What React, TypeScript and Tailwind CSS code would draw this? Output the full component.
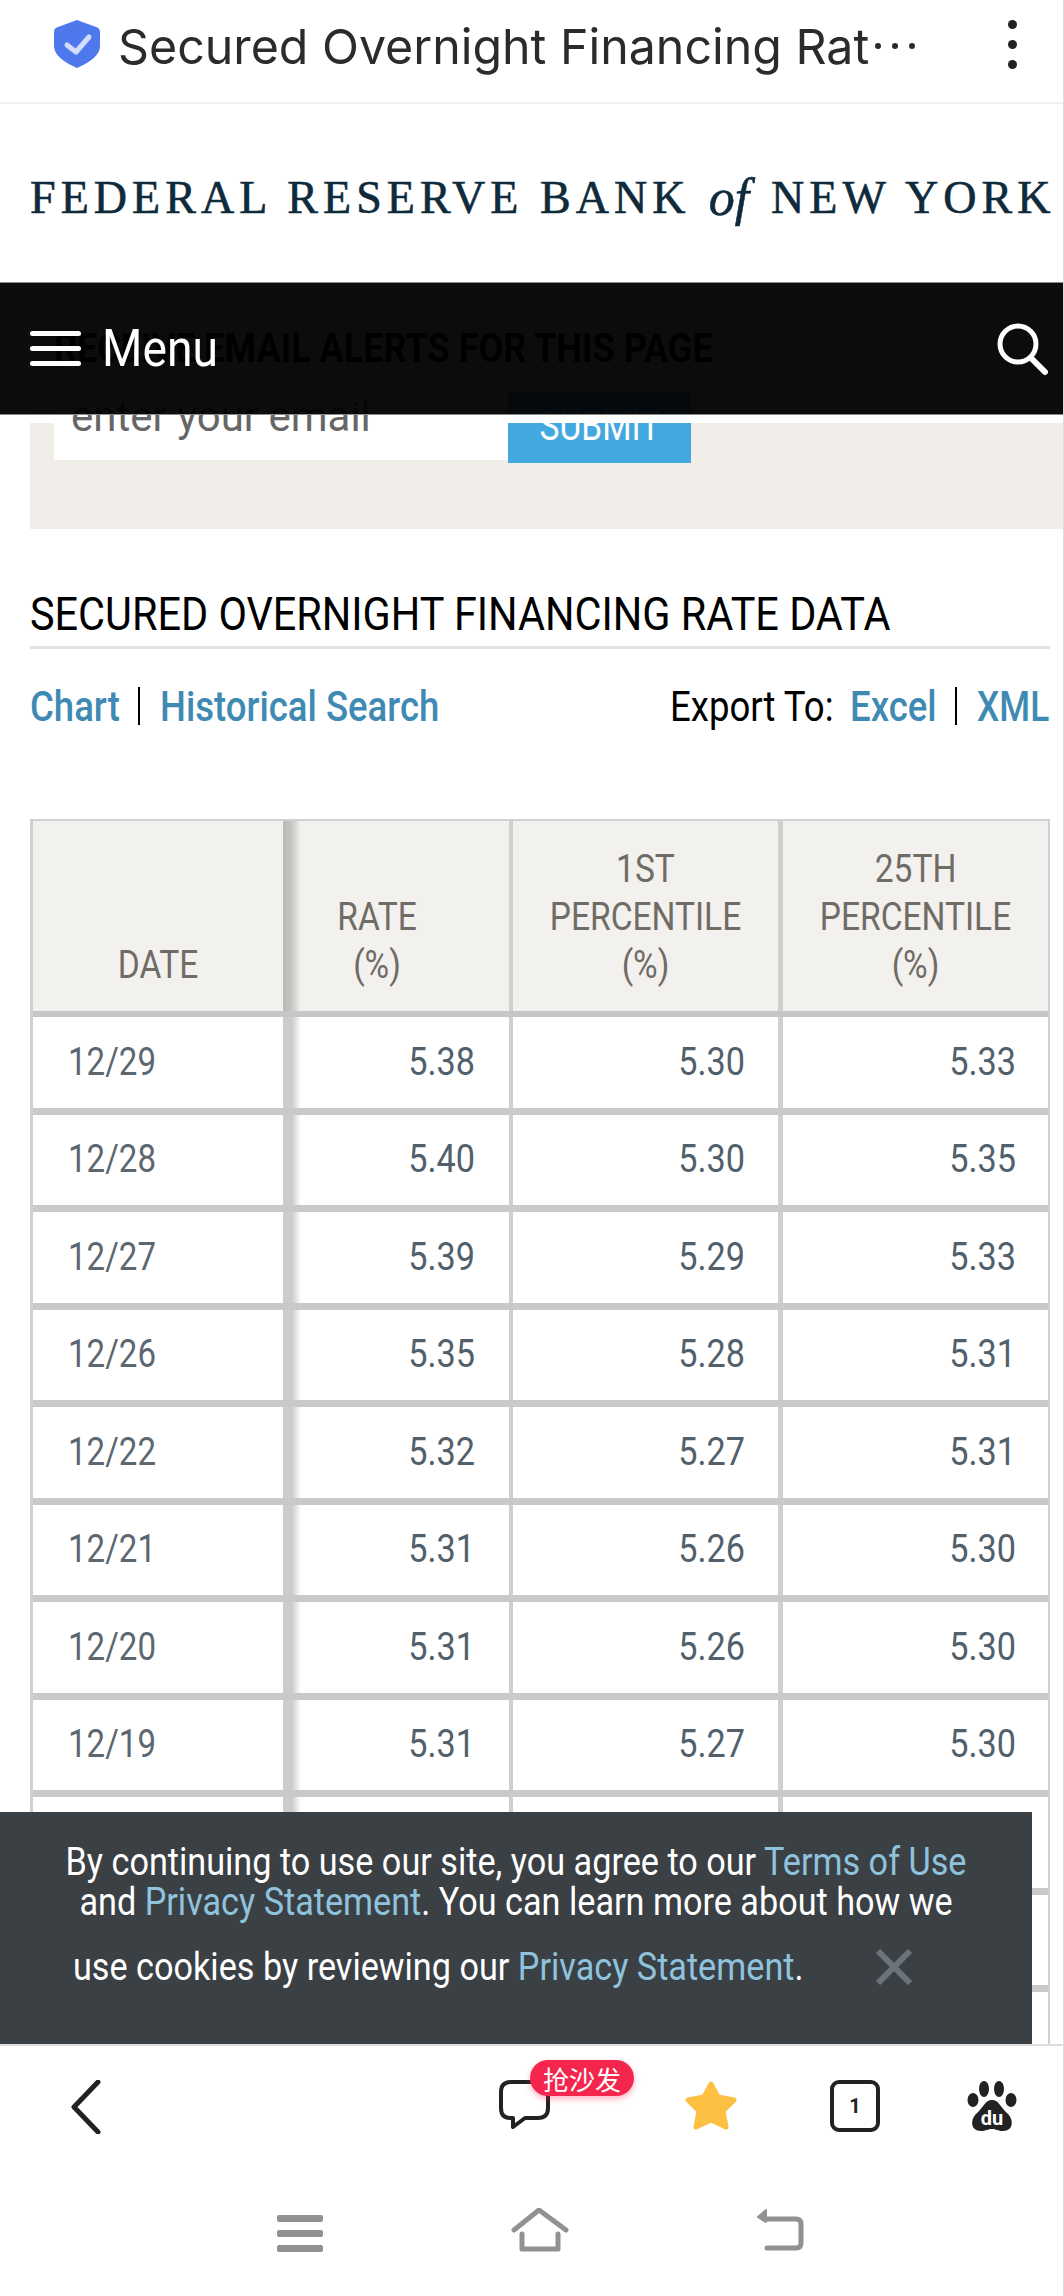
const ROWS = [
  ["12/29", "5.38", "5.30", "5.33"],
  ["12/28", "5.40", "5.30", "5.35"],
  ["12/27", "5.39", "5.29", "5.33"],
  ["12/26", "5.35", "5.28", "5.31"],
  ["12/22", "5.32", "5.27", "5.31"],
  ["12/21", "5.31", "5.26", "5.30"],
  ["12/20", "5.31", "5.26", "5.30"],
  ["12/19", "5.31", "5.27", "5.30"],
  ["", "", "", ""],
  ["", "", "", ""],
  ["", "", "", ""],
];

const COLS = "grid grid-cols-[250px_230px_270px_265px]";

function HeaderCell({ lines, className }: { lines: string[]; className: string }) {
  return (
    <div className={`flex flex-col justify-end pb-[22px] text-[39px] leading-[48px] text-[#6f6c66] ${className}`}>
      {lines.map((line) => (
        <span key={line} className="block scale-x-[0.86] whitespace-nowrap text-center">
          {line}
        </span>
      ))}
    </div>
  );
}

function ValueCell({ value, className }: { value: string; className: string }) {
  return (
    <div className={`flex items-center text-[38px] text-[#51606a] ${className}`}>
      <span className="block w-full origin-right scale-x-[0.9] text-right">{value}</span>
    </div>
  );
}

function RateTable() {
  return (
    <div className="ml-[30px] w-[1020px] border-t-[2px] border-r-[2px] border-l-[3px] border-[#d0d0d0] font-['Roboto',sans-serif]">
      <div className={`${COLS} h-[196px] border-b-[6px] border-[#c6c6c6] bg-[#f3f1ed]`}>
        <HeaderCell lines={["DATE"]} className="" />
        <HeaderCell
          lines={["RATE", "(%)"]}
          className="border-r-[4px] border-[#cfcfcf] pr-[38px] bg-[linear-gradient(to_right,#b9b8b4_0,#c6c5c1_8px,#f3f1ed_18px)]"
        />
        <HeaderCell lines={["1ST", "PERCENTILE", "(%)"]} className="border-r-[5px] border-[#cfcfcf]" />
        <HeaderCell lines={["25TH", "PERCENTILE", "(%)"]} className="" />
      </div>
      {ROWS.map((row, i) => (
        <div key={i} className={`${COLS} h-[97.5px] border-b-[7px] border-[#c9c9c9] bg-white`}>
          <div className="flex items-center pl-[35px] text-[38px] text-[#5c6770]">
            <span className="block origin-left scale-x-[0.87]">{row[0]}</span>
          </div>
          <ValueCell
            value={row[1]}
            className="border-r-[4px] border-[#cfcfcf] pr-[34px] bg-[linear-gradient(to_right,#cccccc_0,#cccccc_9px,#ffffff_18px)]"
          />
          <ValueCell value={row[2]} className="border-r-[5px] border-[#cfcfcf] pr-[33px]" />
          <ValueCell value={row[3]} className="pr-[32px]" />
        </div>
      ))}
    </div>
  );
}

function CookieBanner() {
  return (
    <div className="absolute bottom-0 left-0 z-30 h-[232px] w-[1032px] bg-[#3b4045] pt-[30px] font-['Roboto',sans-serif] text-[38px] leading-[40px] text-white">
      <p className="scale-x-[0.9] whitespace-nowrap text-center">
        By continuing to use our site, you agree to our <span className="text-[#8fc3dd]">Terms of Use</span>
      </p>
      <p className="scale-x-[0.9] whitespace-nowrap text-center">
        and <span className="text-[#8fc3dd]">Privacy Statement</span>. You can learn more about how we
      </p>
      <div className="mt-[25px] flex items-center pl-[73px]">
        <p className="w-[802px] origin-left scale-x-[0.9] whitespace-nowrap">
          use cookies by reviewing our <span className="text-[#8fc3dd]">Privacy Statement</span>.
        </p>
        <svg width="38" height="36" viewBox="0 0 38 36" className="text-[#6c737b]">
          <path d="M3 2 35 34M35 2 3 34" stroke="currentColor" strokeWidth="6" fill="none" />
        </svg>
      </div>
    </div>
  );
}

function SiteNav() {
  return (
    <>
      <div className="absolute top-[178px] left-0 z-20 flex h-[133px] w-full items-center justify-between border-y border-[#8a8a8a] bg-black/95 pr-[15px] pl-[30px]">
        <div className="flex items-center">
          <div className="flex w-[51px] flex-col gap-[10px]">
            <div className="h-[5px] rounded-full bg-white" />
            <div className="h-[5px] rounded-full bg-white" />
            <div className="h-[5px] rounded-full bg-white" />
          </div>
          <span className="ml-[21px] block origin-left scale-x-[0.89] font-['Roboto',sans-serif] text-[52px] leading-none text-white">
            Menu
          </span>
        </div>
        <svg width="52" height="54" viewBox="0 0 52 54" fill="none" stroke="white">
          <circle cx="22" cy="22" r="18" strokeWidth="5" />
          <path d="M35 36 49 50" strokeWidth="6" strokeLinecap="round" />
        </svg>
      </div>
      <div className="absolute top-[311px] left-0 z-10 h-[8px] w-full bg-white" />
    </>
  );
}

function EmailPanel() {
  return (
    <div className="mt-[18px] ml-[30px] h-[229px] bg-[#f1ede8] pt-[26px] pl-[24px] font-['Roboto',sans-serif]">
      <h3 className="origin-left scale-x-[0.9] text-[40px] leading-[46px] font-bold whitespace-nowrap text-black">
        RECEIVE EMAIL ALERTS FOR THIS PAGE
      </h3>
      <div className="mt-[19px] flex items-start">
        <div className="flex h-[69px] w-[454px] items-center bg-white pb-[18px] pl-[17px]">
          <span className="relative z-[15] block text-[42px] text-[#666666]">enter your email</span>
        </div>
        <div className="flex h-[72px] w-[183px] items-center justify-center bg-[#42a8df] text-[40px] text-white">
          <span className="block scale-x-[0.84]">SUBMIT</span>
        </div>
      </div>
    </div>
  );
}

function TopBar() {
  return (
    <div className="flex h-[104px] shrink-0 items-start border-b-[2px] border-[#f1f1f1] pt-[20px] pl-[54px]">
      <svg width="46" height="48" viewBox="0 0 46 48">
        <path d="M23 0 42 7Q46 8 46 12V26Q46 38 23 48 0 38 0 26V12Q0 8 4 7Z" fill="#4f78ec" />
        <path d="M13 25 22 32 35 17" fill="none" stroke="#d3ddfb" strokeWidth="5" strokeLinecap="round" strokeLinejoin="round" />
      </svg>
      <span className="mt-[4px] ml-[18px] w-[750px] font-['Inter',sans-serif] text-[48.3px] leading-[46px] whitespace-nowrap text-[#2b2b2b]">
        Secured Overnight Financing Rat
      </span>
      <div className="mt-[23px] ml-[7px] flex gap-[11px]">
        <div className="size-[6px] rounded-full bg-[#2b2b2b]" />
        <div className="size-[6px] rounded-full bg-[#2b2b2b]" />
        <div className="size-[6px] rounded-full bg-[#2b2b2b]" />
      </div>
      <div className="ml-[93px] flex flex-col gap-[11px]">
        <div className="size-[9px] rounded-full bg-[#222222]" />
        <div className="size-[9px] rounded-full bg-[#222222]" />
        <div className="size-[9px] rounded-full bg-[#222222]" />
      </div>
    </div>
  );
}

function BottomBars() {
  return (
    <div className="relative z-40 h-[252px] shrink-0 border-t-[2px] border-[#dddddd] bg-white">
      <div className="flex items-start pt-[34px]">
        <svg width="30" height="54" viewBox="0 0 30 54" fill="none" stroke="#222222" strokeWidth="5" strokeLinecap="round" strokeLinejoin="round" className="ml-[71px]">
          <path d="M27 2 3 27 27 52" />
        </svg>
        <div className="relative ml-[398px]">
          <svg width="51" height="50" viewBox="0 0 51 50" fill="none" stroke="#222222" strokeWidth="4" strokeLinejoin="round">
            <path d="M12 2H39Q49 2 49 12V28Q49 38 39 38H26L14 47V38H11Q2 38 2 28V12Q2 2 12 2Z" />
          </svg>
          <div className="absolute -top-[20px] left-[31px] flex h-[36px] w-[104px] items-center justify-center rounded-full bg-[#f5264e] font-['Noto_Sans_CJK_SC',sans-serif] text-[26px] whitespace-nowrap text-white shadow-[0_3px_6px_rgba(245,38,78,0.35)]">
            抢沙发
          </div>
        </div>
        <svg width="54" height="50" viewBox="0 0 54 50" className="ml-[134px]">
          <polygon
            points="27,4 34,17 50,20 39,31 42,47 27,40 12,47 15,31 4,20 20,17"
            fill="#fdc042"
            stroke="#fdc042"
            strokeWidth="5"
            strokeLinejoin="round"
          />
        </svg>
        <div className="ml-[92px] flex h-[52px] w-[50px] items-center justify-center rounded-[9px] border-[4px] border-[#222222] font-['Roboto',sans-serif] text-[20px] font-bold text-[#222222]">
          1
        </div>
        <svg width="50" height="52" viewBox="0 0 50 52" className="ml-[87px]" fill="#222222">
          <ellipse cx="17" cy="9" rx="5" ry="8" />
          <ellipse cx="32" cy="9" rx="5" ry="8" />
          <ellipse cx="6" cy="20" rx="5.5" ry="7" />
          <ellipse cx="44" cy="20" rx="5.5" ry="7" />
          <path d="M25 20C32 20 34 28 40 33 47 39 47 51 36 51 31 51 29 49 25 49 21 49 19 51 14 51 3 51 3 39 10 33 16 28 18 20 25 20Z" />
          <text x="25" y="45" textAnchor="middle" fontFamily="Roboto, sans-serif" fontWeight="700" fontSize="20" fill="white">
            du
          </text>
        </svg>
      </div>
      <div className="mt-[74px] flex items-start">
        <div className="mt-[7px] ml-[277px] flex w-[46px] flex-col gap-[8px]">
          <div className="h-[7px] rounded-[2px] bg-[#919191]" />
          <div className="h-[7px] rounded-[2px] bg-[#919191]" />
          <div className="h-[7px] rounded-[2px] bg-[#919191]" />
        </div>
        <svg width="58" height="44" viewBox="0 0 58 44" fill="none" stroke="#919191" strokeWidth="5" strokeLinecap="round" strokeLinejoin="round" className="ml-[188px]">
          <path d="M3 22 28 2 55 22M11 26V41H47V26" />
        </svg>
        <svg width="48" height="43" viewBox="0 0 48 43" fill="none" stroke="#919191" strokeWidth="5" strokeLinecap="round" strokeLinejoin="round" className="ml-[187px]">
          <path d="M8 11H40Q45 11 45 16V35Q45 40 40 40H11" />
          <path d="M10 2 2 9 10 14Z" fill="#919191" strokeWidth="2" />
        </svg>
      </div>
    </div>
  );
}

export default function App() {
  return (
    <div className="flex h-[2296px] w-[1064px] flex-col overflow-hidden border-r border-[#dcdcdc] bg-white">
      <TopBar />

      <div className="relative min-h-0 flex-1 overflow-hidden">
        {/* logo */}
        <div className="flex h-[178px] items-center pt-[10px] pl-[30px] font-['Liberation_Serif',serif] text-[46px] leading-none tracking-[0.11em] whitespace-nowrap text-[#0e2a3b] [-webkit-text-stroke:0.6px_#0e2a3b]">
          FEDERAL RESERVE BANK<i className="ml-[18px] text-[52px] tracking-normal">of</i>
          <span className="ml-[22px]">NEW YORK</span>
        </div>

        <SiteNav />
        <EmailPanel />

        <h2 className="mt-[62px] ml-[30px] h-[58px] w-[1020px] border-b-[3px] border-[#e1e1e1] font-['Roboto',sans-serif] text-[46px] leading-[46px] text-black">
          <span className="block origin-left scale-x-[0.9] whitespace-nowrap">SECURED OVERNIGHT FINANCING RATE DATA</span>
        </h2>

        <div className="mt-[33px] ml-[30px] flex h-[48px] w-[1020px] items-center justify-between font-['Roboto',sans-serif] text-[42px] whitespace-nowrap">
          <div className="flex items-center">
            <a className="block w-[88px] origin-left scale-x-[0.87] font-medium text-[#3f8ab3]">Chart</a>
            <div className="mx-[20px] h-[38px] w-[2px] bg-black" />
            <a className="block w-[280px] origin-left scale-x-[0.87] font-medium text-[#3f8ab3]">Historical Search</a>
          </div>
          <div className="flex items-center">
            <span className="block w-[180px] origin-left scale-x-[0.87] text-black">Export To:</span>
            <a className="block w-[85px] origin-left scale-x-[0.87] font-medium text-[#3f8ab3]">Excel</a>
            <div className="mx-[20px] h-[38px] w-[2px] bg-black" />
            <a className="block w-[73px] origin-left scale-x-[0.84] font-medium text-[#3f8ab3]">XML</a>
          </div>
        </div>

        <div className="mt-[89px]">
          <RateTable />
        </div>

        <CookieBanner />
      </div>

      <BottomBars />
    </div>
  );
}
